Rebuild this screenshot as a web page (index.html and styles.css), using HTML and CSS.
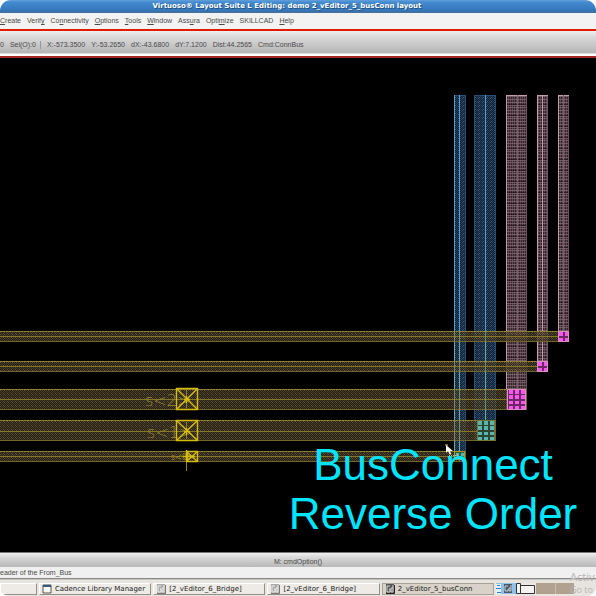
FILE: index.html
```html
<!DOCTYPE html>
<html lang="en">
<head>
<meta charset="utf-8">
<title>Virtuoso Layout Suite L Editing</title>
<link rel="stylesheet" href="styles.css">
</head>
<body>
<div class="window">
  <header class="titlebar">Virtuoso® Layout Suite L Editing: demo 2_vEditor_5_busConn layout</header>
  <nav class="menu">
    <button><u>C</u>reate</button>
    <button>Verif<u>y</u></button>
    <button>Co<u>n</u>nectivity</button>
    <button><u>O</u>ptions</button>
    <button><u>T</u>ools</button>
    <button><u>W</u>indow</button>
    <button>Ass<u>u</u>ra</button>
    <button>Opti<u>m</u>ize</button>
    <button>SKILLCAD</button>
    <button><u>H</u>elp</button>
  </nav>
  <div class="readout">
    <span>0</span>
    <span class="sel">Sel(O):0</span>
    <span>X:-573.3500</span>
    <span>Y:-53.2650</span>
    <span>dX:-43.6800</span>
    <span>dY:7.1200</span>
    <span>Dist:44.2565</span>
    <span>Cmd:ConnBus</span>
  </div>
  <main class="canvas">
    <svg class="drawing" viewBox="0 58 596 494" shape-rendering="crispEdges">
      <defs>
        <pattern id="gold" width="4" height="4" patternUnits="userSpaceOnUse">
          <rect width="4" height="4" fill="#30281a"/>
          <path d="M0 0h1v1H0zM2 0h1v1H2zM1 1h1v1H1zM3 1h1v1H3zM0 2h1v1H0zM2 2h1v1H2zM1 3h1v1H1zM3 3h1v1H3z" fill="#594c31"/>
          <path d="M3 1h1v1H3zM0 2h1v1H0z" fill="#7a6b46"/>
        </pattern>
        <pattern id="blue" width="4" height="4" patternUnits="userSpaceOnUse">
          <rect width="4" height="4" fill="#12202f"/>
          <path d="M0 0h1v1H0zM2 0h1v1H2zM1 1h1v1H1zM3 1h1v1H3zM0 2h1v1H0zM2 2h1v1H2zM1 3h1v1H1zM3 3h1v1H3z" fill="#24405c"/>
          <path d="M3 1h1v1H3zM2 2h1v1H2z" fill="#33608a"/>
        </pattern>
        <pattern id="mauve" width="4" height="11" patternUnits="userSpaceOnUse">
          <rect width="4" height="11" fill="#33242b"/>
          <path d="M0 0h1v11H0zM2 0h1v11H2z" fill="#5b4650"/>
          <path d="M0 0h4v1H0zM0 3h4v1H0zM0 6h4v1H0zM0 8h4v1H0z" fill="#927782" fill-opacity=".6"/>
          <path d="M0 5h4v1H0z" fill="#150d12" fill-opacity=".6"/>
        </pattern>
      </defs>
      <!-- vertical bus -->
      <g fill="url(#blue)" stroke="#245078">
        <path d="M454.500 95.500h11v364h-11zM474.500 95.500h21v345h-21z"/>
      </g>
      <path d="M454 95h1v365h-1zM459 95h1v365h-1zM485 95h1v346h-1z" fill="#559dcc"/>
      <g fill="url(#mauve)" stroke="#6f5360">
        <path d="M506.500 95.500h20v314h-20zM537.500 95.500h10v276h-10zM558.500 95.500h10v246h-10z"/>
      </g>
      <path d="M506 95h1v315h-1zM537 95h1v277h-1zM542 95h1v277h-1zM558 95h1v247h-1zM506 95h21v1h-21zM537 95h11v1h-11zM558 95h11v1h-11z" fill="#c49aac"/>
      <path d="M517 95h1v315h-1zM563 95h1v247h-1z" fill="#7c5a69"/>
      <!-- horizontal bus -->
      <g fill="url(#gold)" fill-opacity=".78" stroke="#71642c">
        <path d="M-1 331.500h569.500v10H-1zM-1 361.500h548.500v10H-1zM-1 389.500h527.500v20H-1zM-1 420.500h496.500v20H-1zM-1 451.500h466.500v10H-1z"/>
      </g>
      <path d="M0 336h558v1H0zM0 366h537v1H0zM0 399h507v1H0zM0 431h477v1H0zM0 456h460v1H0z" fill="#867724"/>
      <path d="M0 331.500h558M0 361.500h537M0 389.500h507M0 420.500h477M0 451.500h460" stroke="#9a8a34" stroke-dasharray="2 1"/>
      <path d="M454 331h1v130h-1zM459 331h1v130h-1zM485 331h1v90h-1z" fill="#7fa98f" fill-opacity=".65"/>
      <!-- vias -->
      <g fill="#6b2867" stroke="#d890bc">
        <path d="M558.500 331.500h10v10h-10zM537.500 361.500h10v10h-10zM507.500 389.500h18v20h-18z"/>
      </g>
      <path d="M559 332h4v4h-4zM565 332h3v4h-3zM559 338h4v3h-4zM565 338h3v3h-3zM538 362h4v4h-4zM544 362h3v4h-3zM538 368h4v3h-4zM544 368h3v3h-3zM509 390h4v4h-4zM515 390h4v4h-4zM521 390h4v4h-4zM509 395h4v4h-4zM515 395h4v4h-4zM521 395h4v4h-4zM509 401h4v3h-4zM515 401h4v3h-4zM521 401h4v3h-4zM509 406h4v3h-4zM515 406h4v3h-4zM521 406h4v3h-4z" fill="#fa55ed"/>
      <path d="M477.500 420.500h17v20h-17z" fill="#2d4434" stroke="#777832"/>
      <path d="M478 421h4v4h-4zM484 421h4v4h-4zM490 421h4v4h-4zM478 426h4v4h-4zM484 426h4v4h-4zM490 426h4v4h-4zM478 432h4v3h-4zM484 432h4v3h-4zM490 432h4v3h-4zM478 437h4v3h-4zM484 437h4v3h-4zM490 437h4v3h-4z" fill="#58b6ae"/>
      <path d="M454.500 451.500h10v8h-10z" fill="#34583a" stroke="#a59b28"/>
      <path d="M456 453h3v3h-3zM461 453h3v3h-3z" fill="#58b6ae"/>
      <!-- pins -->
      <g class="pin-label">
        <text x="145" y="406">s&lt;2&gt;</text>
        <text x="147" y="438">s&lt;1&gt;</text>
        <text class="small" x="171" y="460">s&lt;0&gt;</text>
      </g>
      <g fill="none" stroke="#d6bd0c" stroke-width="1.400" shape-rendering="auto">
        <path d="M176.500 388.500h21v21h-21zM176.500 420.500h21v20h-21zM187.500 451.500h10v10h-10z"/>
        <path d="M177 389l20 20M197 389l-20 20M177 421l20 19M197 421l-20 19M187 452l10 9M197 452l-10 9M184 399.500h6M184 431.500h6M183 456.500h12"/>
        <path d="M186.500 390v18M186.500 422v17M186.500 462v9" stroke="#94831b" stroke-width="1"/>
        <path d="M186.500 396v7M186.500 428v7M186.500 450v12"/>
      </g>
      <!-- pointer -->
      <path d="M445 444h3v2h-3z" fill="#77602c"/>
      <path d="M446 445v8l2-2 2 4 1-1-1-3h3z" fill="#fff" shape-rendering="auto"/>
      <path d="M449 455.500h9" stroke="#bbb" stroke-dasharray="1 1"/>
      <g class="caption">
        <text x="433" y="480">BusConnect</text>
        <text x="433" y="529">Reverse Order</text>
      </g>
    </svg>
  </main>
  <div class="status">M: cmdOption()</div>
  <div class="prompt">eader of the From_Bus</div>
  <footer class="taskbar">
    <button class="task stub" aria-label="Window list"></button>
    <button class="task">
      <svg class="icon" viewBox="0 0 10 10"><path d="M1 1h8v8H1z" fill="#f8f8f8" stroke="#555"/><path d="M1 1h8v2H1z" fill="#3a577f"/></svg>
      Cadence Library Manager
    </button>
    <button class="task">
      <svg class="icon" viewBox="0 0 10 10"><path d="M1 0h8v10H1z" fill="#aaa"/><path d="M5 2H2v6h3V5H4M6 4h2v4H6zM8 1v3" fill="none" stroke="#eee"/><path d="M1 9.500h8.500V1" fill="none" stroke="#777"/></svg>
      [2_vEditor_6_Bridge]
    </button>
    <button class="task">
      <svg class="icon" viewBox="0 0 10 10"><path d="M1 0h8v10H1z" fill="#aaa"/><path d="M5 2H2v6h3V5H4M6 4h2v4H6zM8 1v3" fill="none" stroke="#eee"/><path d="M1 9.500h8.500V1" fill="none" stroke="#777"/></svg>
      [2_vEditor_6_Bridge]
    </button>
    <button class="task active">
      <svg class="icon" viewBox="0 0 10 10"><path d="M1 0h8v10H1z" fill="#555"/><path d="M5 2H2v6h3V5H4M6 4h2v4H6zM8 1v3" fill="none" stroke="#ddd"/><path d="M1 9.500h8.500V1" fill="none" stroke="#222"/></svg>
      2_vEditor_5_busConn
    </button>
    <svg class="tray" viewBox="0 0 78 12">
      <path d="M0 0h20v11H0z" fill="#8fc0ea"/>
      <path d="M0 1h5v10H0z" fill="#e4f1fb"/>
      <path d="M1 2.500h3M0 5.500h5M1 9.500h4" stroke="#2c7fd0"/>
      <path d="M8 1h8v9H8z" fill="#4d5964"/>
      <path d="M12 3H9v5h3V6M13 5h2v3h-2zM15 2v3" fill="none" stroke="#ccd5dc"/>
      <path d="M20 0h19v11H20z" fill="#ece9e4"/>
      <path d="M20.500 .5h4v10h-4zM24.500 2.500h14v8h-14z" fill="#f5f4f2" stroke="#333"/>
      <path d="M40 0h38v11H40z" fill="#b0a28f"/>
      <path d="M59 0h1v11h-1z" fill="#c9bdad"/>
    </svg>
  </footer>
  <aside class="watermark">
    <p class="heading">Activ</p>
    <p>Go to</p>
  </aside>
</div>
</body>
</html>
```

FILE: styles.css
```css
* {
  box-sizing: border-box;
}

body {
  margin: 0;
  background: #fff;
  font-family: "Liberation Sans", sans-serif;
  font-size: 7px;
  line-height: 8px;
  color: #4a4a4a;
}

button {
  border: 0;
  padding: 0;
  background: none;
  font: inherit;
  color: inherit;
}

.window {
  position: relative;
  display: flex;
  flex-direction: column;
  min-height: 100vh;
  overflow: hidden;
  border-radius: 11px 11px 9px 9px;
  background: #efefef;
}

.titlebar {
  height: 13px;
  padding: 2px 22px 0 0;
  background: linear-gradient(#62a0da, #4389cf 20%, #3575b7 85%, #4a6f91);
  color: #fff;
  font-family: "DejaVu Sans", sans-serif;
  font-weight: bold;
  text-align: center;
  text-shadow: 1px 1px 0 #23507f;
  white-space: nowrap;
}

.menu {
  display: flex;
  align-items: center;
  gap: 6px;
  height: 16px;
  background: #f3f3f3;
}

.menu u {
  text-underline-offset: 1px;
}

.readout {
  display: flex;
  align-items: center;
  gap: 6px;
  height: 29px;
  padding-top: 2px;
  border-top: 2px solid #e31b05;
  border-bottom: 2px solid #a42722;
  background: linear-gradient(#f0f0f0, #dcdcdc 20%, #b5b5b5 88%, #fff 92%);
  white-space: nowrap;
}

.sel {
  padding-right: 4px;
  border-right: 1px solid #999;
}

.canvas {
  flex: 1;
  display: flex;
  background: #000;
}

.drawing {
  display: block;
  width: 100%;
}

.pin-label {
  fill: #988730;
  font-family: "DejaVu Sans Light", "DejaVu Sans", sans-serif;
  font-weight: 200;
  font-size: 16px;
}

.pin-label .small {
  fill: #c5ae16;
  font-size: 8px;
}

.caption {
  fill: #00e5ff;
  font-size: 44px;
  text-anchor: middle;
}

.status {
  height: 15px;
  padding-top: 5px;
  border-top: 1px solid #777;
  background: linear-gradient(#f0f0f0, #d8d8d8 30%, #b8b8b8);
  text-align: center;
}

.prompt {
  height: 12px;
  padding-top: 2px;
  border-bottom: 1px solid #888;
  background: #f0f0f0;
}

.taskbar {
  display: flex;
  gap: 2px;
  height: 17px;
  padding-top: 3px;
  padding-right: 22px;
  border-top: 1px solid #c8c4be;
  background: #e7e4df;
  color: #222;
  font-family: "DejaVu Sans", sans-serif;
}

.task {
  display: flex;
  flex: 112;
  align-items: center;
  gap: 3px;
  height: 12px;
  padding-left: 2px;
  border: 1px solid #fff;
  border-right-color: #968f85;
  border-bottom-color: #968f85;
  background: #eeebe6;
  white-space: nowrap;
}

.task.stub {
  flex: 34;
}

.task.active {
  border-color: #aaa196;
  background: #d8d2c8;
}

.icon {
  flex: none;
  width: 10px;
  height: 10px;
}

.tray {
  flex: none;
  width: 78px;
  height: 12px;
}

.watermark {
  position: absolute;
  right: 0;
  bottom: 0;
  width: 26px;
  overflow: hidden;
  color: #b4b4b4;
  font-family: "Open Sans", sans-serif;
  font-size: 9px;
  line-height: 12px;
  white-space: nowrap;
}

.watermark p {
  margin: 0;
}

.watermark .heading {
  font-size: 11px;
  line-height: 14px;
}
```
